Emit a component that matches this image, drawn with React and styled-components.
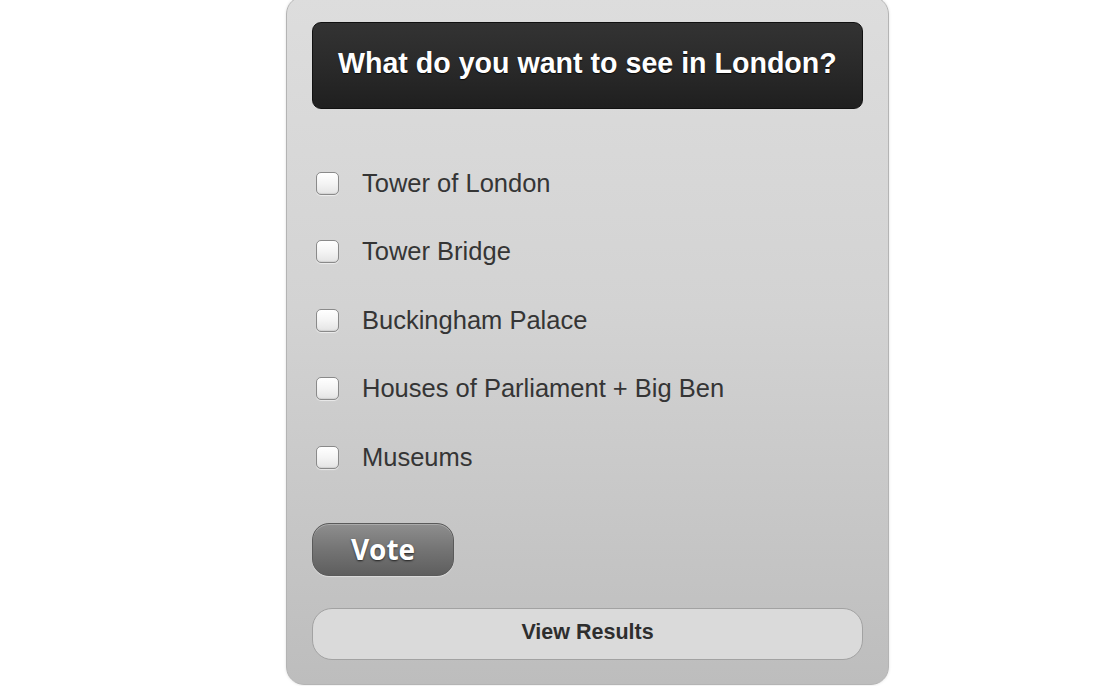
import React from 'react';
import styled, { createGlobalStyle } from 'styled-components';

const GlobalStyle = createGlobalStyle`
  html, body {
    margin: 0;
    padding: 0;
    background: #ffffff;
  }
  body {
    font-family: "Liberation Sans", Arial, Helvetica, sans-serif;
  }
`;

const Page = styled.div`
  padding-left: 286px;
  height: 686px;
  overflow: hidden;
`;

const Card = styled.form`
  box-sizing: border-box;
  width: 603px;
  margin-top: -4px;
  padding: 25px 25px 24px 25px;
  border: 1px solid #b4b4b4;
  border-radius: 18px;
  background: linear-gradient(to bottom, #dddddd 0%, #d3d3d3 45%, #bdbdbd 100%);
  box-shadow: 0 0 3px rgba(0, 0, 0, 0.12);
`;

const Question = styled.h2`
  margin: 0;
  height: 87px;
  box-sizing: border-box;
  display: flex;
  align-items: center;
  padding: 0 0 4px 25px;
  border: 1px solid #111;
  border-radius: 9px;
  background: linear-gradient(to bottom, #333333 0%, #2a2a2a 50%, #1f1f1f 100%);
  color: #ffffff;
  font-size: 28.6px;
  font-weight: bold;
  text-shadow: 0 1px 1px rgba(0, 0, 0, 0.8);
`;

const Options = styled.ul`
  list-style: none;
  margin: 40px 0 0 0;
  padding: 0;
`;

const Option = styled.li`
  height: 68.5px;
  display: flex;
  align-items: center;
`;

const Box = styled.span`
  box-sizing: border-box;
  width: 23px;
  height: 23px;
  margin-left: 4px;
  margin-right: 23px;
  border: 1.5px solid #8a8a8a;
  border-radius: 5px;
  background: linear-gradient(to bottom, #ffffff 0%, #f4f4f4 50%, #e4e4e4 100%);
  box-shadow: inset 0 -1px 1px rgba(0, 0, 0, 0.08), 0 1px 1px rgba(255, 255, 255, 0.6);
  flex-shrink: 0;
`;

const Label = styled.label`
  font-size: 25.5px;
  color: #353535;
`;

const VoteButton = styled.button`
  display: block;
  margin-top: 31px;
  width: 142px;
  height: 53px;
  border: 1px solid #5a5a5a;
  border-radius: 17px;
  background: linear-gradient(to bottom, #8e8e8e 0%, #747474 50%, #5e5e5e 100%);
  box-shadow: 0 1px 1px rgba(255, 255, 255, 0.4), inset 0 1px 0 rgba(255, 255, 255, 0.25);
  color: #ffffff;
  font-family: "Open Sans", "Noto Sans", sans-serif;
  font-size: 28px;
  font-weight: 700;
  text-shadow: 0 1px 2px rgba(0, 0, 0, 0.7);
  padding: 0;
  cursor: pointer;
`;

const ResultsButton = styled.button`
  display: block;
  margin-top: 32px;
  width: 100%;
  height: 52px;
  border: 1.5px solid #a2a2a2;
  border-radius: 20px;
  background: #dadada;
  color: #2e2e2e;
  font-family: "Liberation Sans", Arial, sans-serif;
  font-size: 21.5px;
  font-weight: bold;
  padding: 0 0 2px 0;
  cursor: pointer;
`;

const choices = [
  'Tower of London',
  'Tower Bridge',
  'Buckingham Palace',
  'Houses of Parliament + Big Ben',
  'Museums',
];

export default function App() {
  return (
    <>
      <GlobalStyle />
      <Page>
        <Card onSubmit={(e) => e.preventDefault()}>
          <Question>What do you want to see in London?</Question>
          <Options>
            {choices.map((c) => (
              <Option key={c}>
                <Box />
                <Label>{c}</Label>
              </Option>
            ))}
          </Options>
          <VoteButton type="button">Vote</VoteButton>
          <ResultsButton type="button">View Results</ResultsButton>
        </Card>
      </Page>
    </>
  );
}
